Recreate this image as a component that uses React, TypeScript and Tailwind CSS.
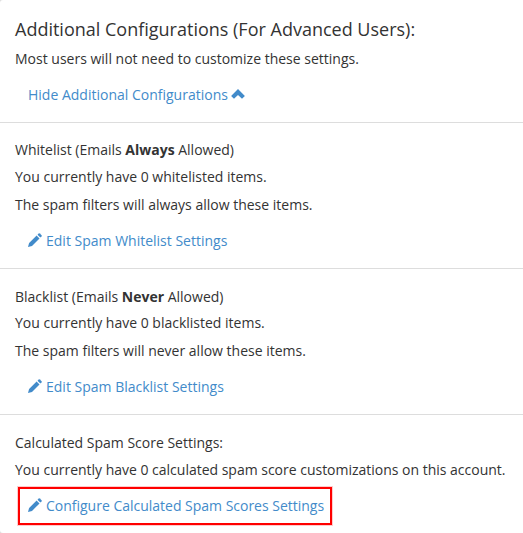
import type { ReactNode } from 'react';

const PencilIcon = () => (
  <svg
    width="14"
    height="14"
    viewBox="0 0 14 14"
    fill="currentColor"
    className="mr-1 shrink-0"
  >
    <path d="M0 14 L1.1 10 L8.6 2.5 L11.5 5.4 L4 12.9 Z" />
    <path d="M9.5 1.7 L10.8 0.4 Q11.3 0 11.8 0.4 L13.6 2.2 Q14 2.7 13.6 3.2 L12.3 4.5 Z" />
  </svg>
);

const ChevronUpIcon = () => (
  <svg
    width="14"
    height="10"
    viewBox="0 0 14 10"
    fill="currentColor"
    className="ml-[3px] shrink-0"
  >
    <path d="M7 0 L13.9 6.9 L11 9.8 L7 6 L3 9.8 L0.1 6.9 Z" />
  </svg>
);

interface ISectionProps {
  title: ReactNode;
  lines: string[];
  link: string;
}

const Section = ({ title, lines, link }: ISectionProps) => {
  return (
    <section className="h-[146.4px] border-t border-[#dddddd] px-[15px] pt-[17.7px]">
      <h4 className="h-[26.7px] leading-5">{title}</h4>
      {lines.map((line) => (
        <p key={line} className="h-7 leading-5">
          {line}
        </p>
      ))}
      <a
        href="#"
        className="ml-[13px] mt-[7.06px] flex h-5 items-center text-[#428bca]"
      >
        <PencilIcon />
        {link}
      </a>
    </section>
  );
};

const App = () => {
  return (
    <div className="h-[533px] w-[523px] bg-[#dddddd]">
      <main className="h-full overflow-hidden whitespace-nowrap rounded-l-[3px] bg-white font-['Open_Sans',sans-serif] text-[14px] text-[#333333]">
        <header className="h-[121.6px] px-[15px] pt-[19px]">
          <h3 className="text-[18px] leading-5">
            Additional Configurations (For Advanced Users):
          </h3>
          <p className="mt-[10px] leading-5">
            Most users will not need to customize these settings.
          </p>
          <a
            href="#"
            className="ml-[13px] mt-[15px] flex h-5 items-center text-[#428bca]"
          >
            Hide Additional Configurations
            <ChevronUpIcon />
          </a>
        </header>
        <Section
          title={
            <>
              Whitelist (Emails <strong>Always</strong> Allowed)
            </>
          }
          lines={[
            'You currently have 0 whitelisted items.',
            'The spam filters will always allow these items.',
          ]}
          link="Edit Spam Whitelist Settings"
        />
        <Section
          title={
            <>
              Blacklist (Emails <strong>Never</strong> Allowed)
            </>
          }
          lines={[
            'You currently have 0 blacklisted items.',
            'The spam filters will never allow these items.',
          ]}
          link="Edit Spam Blacklist Settings"
        />
        <section className="border-t border-[#dddddd] px-[15px] pt-[17.7px]">
          <h4 className="h-[26.7px] leading-5">
            Calculated Spam Score Settings:
          </h4>
          <p className="leading-5 tracking-[-0.01px]">
            You currently have 0 calculated spam score customizations on this
            account.
          </p>
          <a
            href="#"
            className="ml-[3px] mt-[7px] flex h-[38px] w-[314px] items-center border-2 border-[#ff0000] pb-px pl-2 tracking-[-0.01px] text-[#428bca] shadow-[0_0_0_1px_rgba(255,0,0,0.2)]"
          >
            <PencilIcon />
            Configure Calculated Spam Scores Settings
          </a>
        </section>
      </main>
    </div>
  );
};

export default App;
